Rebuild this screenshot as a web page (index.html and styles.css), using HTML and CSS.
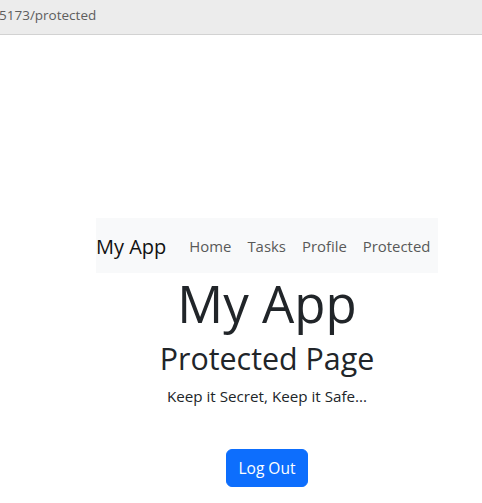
FILE: index.html
```html
<!DOCTYPE html>
<html lang="en">
<head>
<meta charset="utf-8">
<title>My App</title>
<link rel="stylesheet" href="styles.css">
</head>
<body>
<div class="browser-bar"><span class="url">5173/protected</span></div>
<div class="page">
  <div class="app">
    <nav class="navbar">
      <a class="brand" href="#">My App</a>
      <ul class="nav">
        <li><a class="nav-link" href="#">Home</a></li>
        <li><a class="nav-link" href="#">Tasks</a></li>
        <li><a class="nav-link" href="#">Profile</a></li>
        <li><a class="nav-link" href="#">Protected</a></li>
      </ul>
    </nav>
    <main class="content">
      <h1 class="title">My App</h1>
      <h2 class="subtitle">Protected Page</h2>
      <p class="tagline">Keep it Secret, Keep it Safe...</p>
      <button class="btn" type="button">Log Out</button>
    </main>
  </div>
</div>
</body>
</html>
```
FILE: styles.css
```css
* { box-sizing: border-box; }
html, body { margin: 0; padding: 0; background: #fff; }
body {
  font-family: "Open Sans", "Noto Sans", sans-serif;
  color: #212529;
}
.browser-bar {
  height: 35px;
  background: #ececec;
  border-bottom: 1px solid #d2d2d2;
  display: flex;
  align-items: center;
  padding-bottom: 4px;
}
.url {
  font-size: 13.5px;
  color: #5e5e5e;
  margin-left: -1px;
}
.page {
  padding-top: 183px;
}
.app {
  margin-left: 96px;
  width: 342px;
}
.navbar {
  display: flex;
  align-items: center;
  height: 55px;
  background: #f8f9fa;
  white-space: nowrap;
}
.brand {
  font-size: 20px;
  color: #111;
  text-decoration: none;
  margin-right: 15px;
  margin-top: 2px;
}
.nav {
  list-style: none;
  margin: 0;
  padding: 0;
  display: flex;
}
.nav-link {
  display: block;
  padding: 8px;
  font-size: 14.9px;
  color: #595959;
  text-decoration: none;
}
.content {
  display: flex;
  flex-direction: column;
  align-items: center;
  text-align: center;
}
.title {
  font-size: 51px;
  font-weight: 400;
  line-height: 60px;
  margin: 0 0 7px;
}
.subtitle {
  font-size: 30.4px;
  font-weight: 400;
  line-height: 38px;
  margin: 0 0 6px;
}
.tagline {
  font-size: 15.2px;
  line-height: 24px;
  margin: 0 0 41px;
}
.btn {
  font-family: inherit;
  font-size: 15.5px;
  line-height: 24px;
  padding: 6px 12px;
  border: 1px solid #0d6efd;
  border-radius: 6px;
  background: #0d6efd;
  color: #fff;
  cursor: pointer;
}
```
